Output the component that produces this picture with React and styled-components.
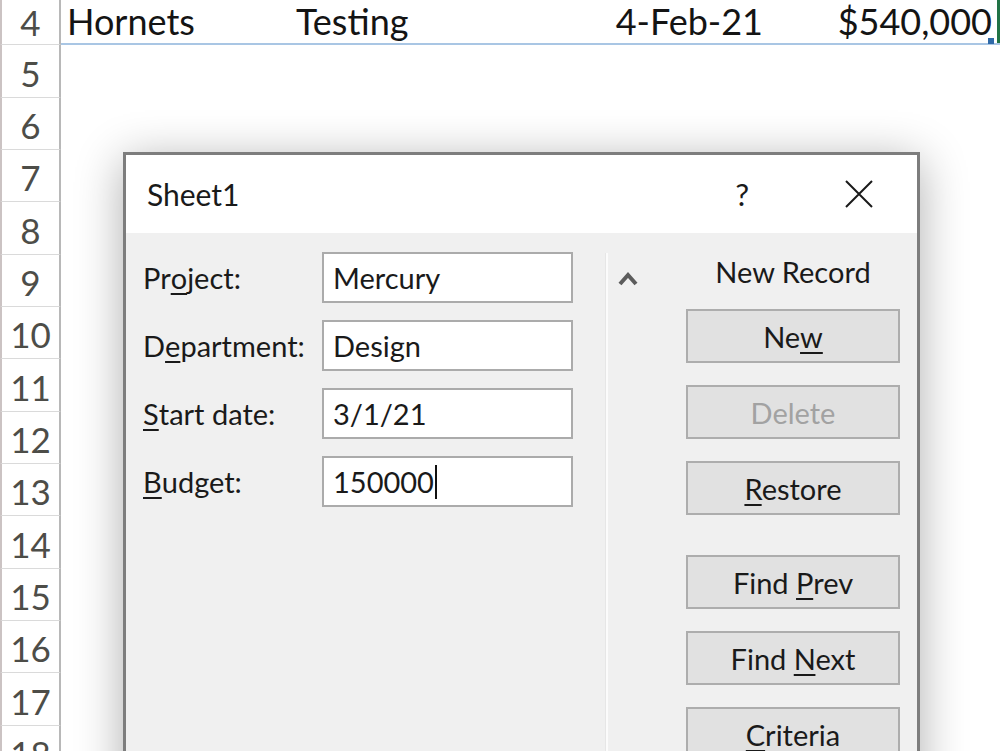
import React from "react";
import styled, { createGlobalStyle } from "styled-components";

const Global = createGlobalStyle`
  html, body { margin: 0; padding: 0; background: #ffffff; }
  body { overflow: hidden; }
`;

const Page = styled.div`
  position: relative;
  width: 1000px;
  height: 751px;
  overflow: hidden;
  background: #ffffff;
  font-family: Lato, "Open Sans", sans-serif;
`;

const Sheet = styled.div`
  display: flex;
  flex-direction: column;
  margin-top: -7px;
`;

const Row = styled.div`
  display: grid;
  grid-template-columns: 61px 1fr;
  height: 52.33px;
  flex: none;
`;

const RowHead = styled.div`
  box-sizing: border-box;
  border-left: 2px solid #cbc3c3;
  border-right: 2px solid #b8b8b8;
  border-bottom: 1px solid #dadada;
  display: flex;
  align-items: flex-end;
  justify-content: center;
  padding-bottom: ${(p) => (p.$first ? "1px" : "3px")};
  font-size: 35px;
  line-height: 1.2;
  color: #4d4d48;
`;

const Cells = styled.div`
  box-sizing: border-box;
  display: grid;
  grid-template-columns: 229px 250px 228px 229px 1fr;
  border-bottom: ${(p) => (p.$table ? "2px solid #a9c6e4" : "0")};
`;

const Cell = styled.div`
  position: relative;
  display: flex;
  align-items: flex-end;
  justify-content: ${(p) => (p.$right ? "flex-end" : "flex-start")};
  padding: 0 ${(p) => (p.$right ? "5px" : "6px")} 4px;
  font-size: 36px;
  line-height: 1;
  color: #141414;
  white-space: nowrap;
  border-left: ${(p) => (p.$selected ? "3px solid #217346" : "0")};
`;

const TableCorner = styled.span`
  position: absolute;
  right: 3px;
  bottom: -1px;
  width: 6px;
  height: 6px;
  background: #2f6aa8;
`;

const Dialog = styled.div`
  position: absolute;
  left: 123px;
  top: 152px;
  width: 797px;
  height: 660px;
  box-sizing: border-box;
  border: 3px solid #7d7d7d;
  background: #f0f0f0;
  box-shadow: 0 8px 44px rgba(0, 0, 0, 0.32);
  display: flex;
  flex-direction: column;
`;

const TitleBar = styled.div`
  height: 78px;
  flex: none;
  background: #ffffff;
  display: flex;
  align-items: center;
  padding: 0 44px 0 21px;
`;

const Title = styled.div`
  flex: 1;
  font-size: 30px;
  color: #1a1a1a;
`;

const Help = styled.div`
  font-size: 31px;
  color: #1a1a1a;
  margin-right: 96px;
`;

const Body = styled.div`
  flex: 1;
  display: flex;
`;

const Fields = styled.div`
  width: 479px;
  box-sizing: border-box;
  padding: 19px 0 0 17px;
  display: grid;
  grid-template-columns: 179px 251px;
  grid-auto-rows: 51px;
  row-gap: 17px;
  align-content: start;
`;

const Label = styled.label`
  display: flex;
  align-items: center;
  font-size: 29px;
  color: #1a1a1a;
  white-space: nowrap;
`;

const Key = styled.u`
  text-decoration-thickness: 2px;
  text-underline-offset: 4px;
`;

const TextBox = styled.div`
  box-sizing: border-box;
  border: 2px solid #ababab;
  background: #ffffff;
  display: flex;
  align-items: center;
  padding-left: 9px;
  font-size: 29px;
  color: #1a1a1a;
  white-space: nowrap;
`;

const Caret = styled.span`
  display: inline-block;
  width: 2px;
  height: 34px;
  background: #111;
  margin-left: 1px;
`;

const Divider = styled.div`
  width: 2px;
  margin-top: 20px;
  background: #fbfbfb;
  border-left: 1px solid #e6e6e6;
`;

const ScrollCol = styled.div`
  width: 78px;
  padding: 37px 0 0 10px;
  box-sizing: border-box;
`;

const Buttons = styled.div`
  width: 214px;
  padding-top: 19px;
  display: flex;
  flex-direction: column;
`;

const Heading = styled.div`
  height: 40px;
  line-height: 40px;
  text-align: center;
  font-size: 29px;
  color: #1a1a1a;
  margin-bottom: 17px;
`;

const Button = styled.div`
  box-sizing: border-box;
  height: 54px;
  flex: none;
  border: 2px solid #adadad;
  background: #e1e1e1;
  display: flex;
  align-items: center;
  justify-content: center;
  font-size: 29px;
  white-space: pre;
  color: ${(p) => (p.$disabled ? "#a2a2a2" : "#1a1a1a")};
  margin-bottom: ${(p) => (p.$gapAfter ? "40px" : "22px")};
`;

const rows = Array.from({ length: 15 }, (_, i) => i + 4);

const fields = [
  { label: <>Pr<Key>o</Key>ject:</>, value: "Mercury" },
  { label: <>D<Key>e</Key>partment:</>, value: "Design" },
  { label: <><Key>S</Key>tart date:</>, value: "3/1/21" },
  { label: <><Key>B</Key>udget:</>, value: "150000", caret: true },
];

const buttons = [
  { text: <>Ne<Key>w</Key></> },
  { text: <>Delete</>, disabled: true },
  { text: <><Key>R</Key>estore</>, gapAfter: true },
  { text: <>Find <Key>P</Key>rev</> },
  { text: <>Find <Key>N</Key>ext</> },
  { text: <><Key>C</Key>riteria</> },
];

export default function App() {
  return (
    <Page>
      <Global />
      <Sheet>
        {rows.map((n) => (
          <Row key={n}>
            <RowHead $first={n === 4}>{n}</RowHead>
            <Cells $table={n === 4}>
              {n === 4 && (
                <>
                  <Cell>Hornets</Cell>
                  <Cell>Testing</Cell>
                  <Cell $right>4-Feb-21</Cell>
                  <Cell $right>
                    $540,000
                    <TableCorner />
                  </Cell>
                  <Cell $selected />
                </>
              )}
            </Cells>
          </Row>
        ))}
      </Sheet>

      <Dialog>
        <TitleBar>
          <Title>Sheet1</Title>
          <Help>?</Help>
          <svg width="28" height="28" viewBox="0 0 28 28">
            <path d="M1 1 L27 27 M27 1 L1 27" stroke="#1a1a1a" strokeWidth="2" fill="none" />
          </svg>
        </TitleBar>
        <Body>
          <Fields>
            {fields.map((f, i) => (
              <React.Fragment key={i}>
                <Label>{f.label}</Label>
                <TextBox>
                  {f.value}
                  {f.caret && <Caret />}
                </TextBox>
              </React.Fragment>
            ))}
          </Fields>
          <Divider />
          <ScrollCol>
            <svg width="20" height="16" viewBox="0 0 20 16">
              <path d="M2 14 L10 5 L18 14" stroke="#5c5c5c" strokeWidth="4" fill="none" />
            </svg>
          </ScrollCol>
          <Buttons>
            <Heading>New Record</Heading>
            {buttons.map((b, i) => (
              <Button key={i} $disabled={b.disabled} $gapAfter={b.gapAfter}>
                <span>{b.text}</span>
              </Button>
            ))}
          </Buttons>
        </Body>
      </Dialog>
    </Page>
  );
}
